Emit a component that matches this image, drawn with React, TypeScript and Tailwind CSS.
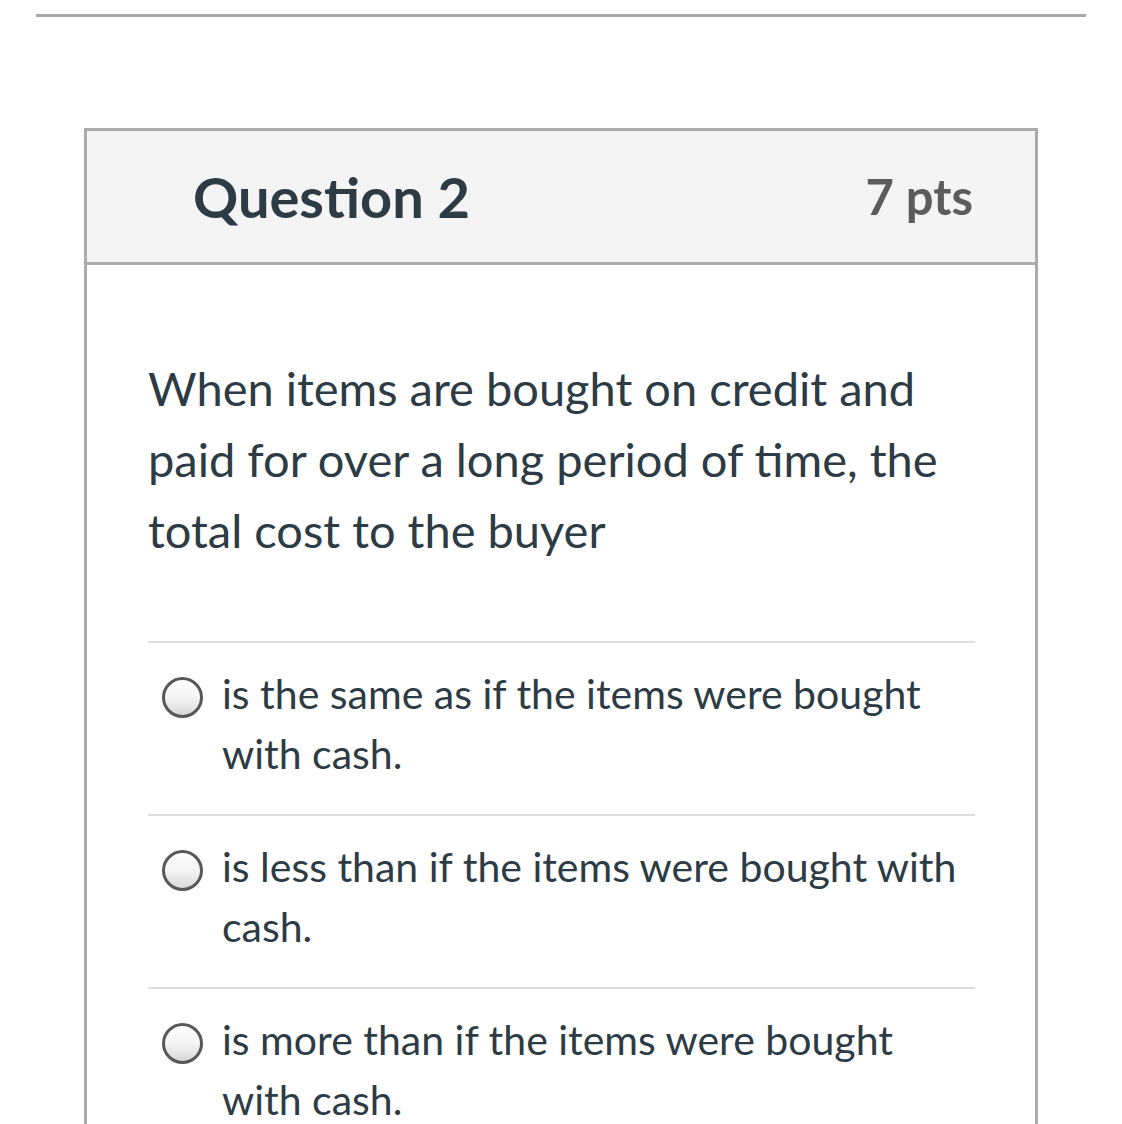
import React from "react";

const options = [
  "is the same as if the items were bought with cash.",
  "is less than if the items were bought with cash.",
  "is more than if the items were bought with cash.",
];

function Radio() {
  return (
    <span className="mt-[13px] ml-[14px] h-[41px] w-[41px] shrink-0 rounded-full border-[3px] border-[#585858] bg-gradient-to-b from-[#ffffff] via-[#f4f4f4] to-[#d9d9d9]" />
  );
}

export default function App() {
  return (
    <div className="h-[1124px] w-[1122px] overflow-hidden bg-white font-['Lato',sans-serif] text-[#2d3b45]">
      <div className="pt-[14px]">
        <div className="ml-[36px] h-[3px] w-[1050px] bg-[#a9a9a9]" />
      </div>
      <div className="ml-[84px] mt-[111px] w-[954px] border-x-[3px] border-t-[3px] border-[#ababab]">
        <div className="flex h-[134px] items-center justify-between border-b-[3px] border-[#ababab] bg-[#f4f4f4] pl-[106px] pr-[62px]">
          <h2 className="text-[56px] font-bold leading-[1.2] text-[#2d3b45]">Question 2</h2>
          <div className="text-[49px] font-bold leading-[1.2] text-[#5c5c5c]">7 pts</div>
        </div>
        <div className="pl-[61px] pr-[60px] pt-[88px]">
          <p className="text-[47px] leading-[71px]">
            When items are bought on credit and paid for over a long period of time, the total cost to the buyer
          </p>
          <div className="mt-[75px]">
            {options.map((o) => (
              <div key={o} className="flex items-start gap-[19px] border-t-2 border-[#dddddd] pt-[21px] pb-[30px]">
                <Radio />
                <span className="max-w-[742px] text-[41px] leading-[60px]">{o}</span>
              </div>
            ))}
          </div>
        </div>
      </div>
    </div>
  );
}
